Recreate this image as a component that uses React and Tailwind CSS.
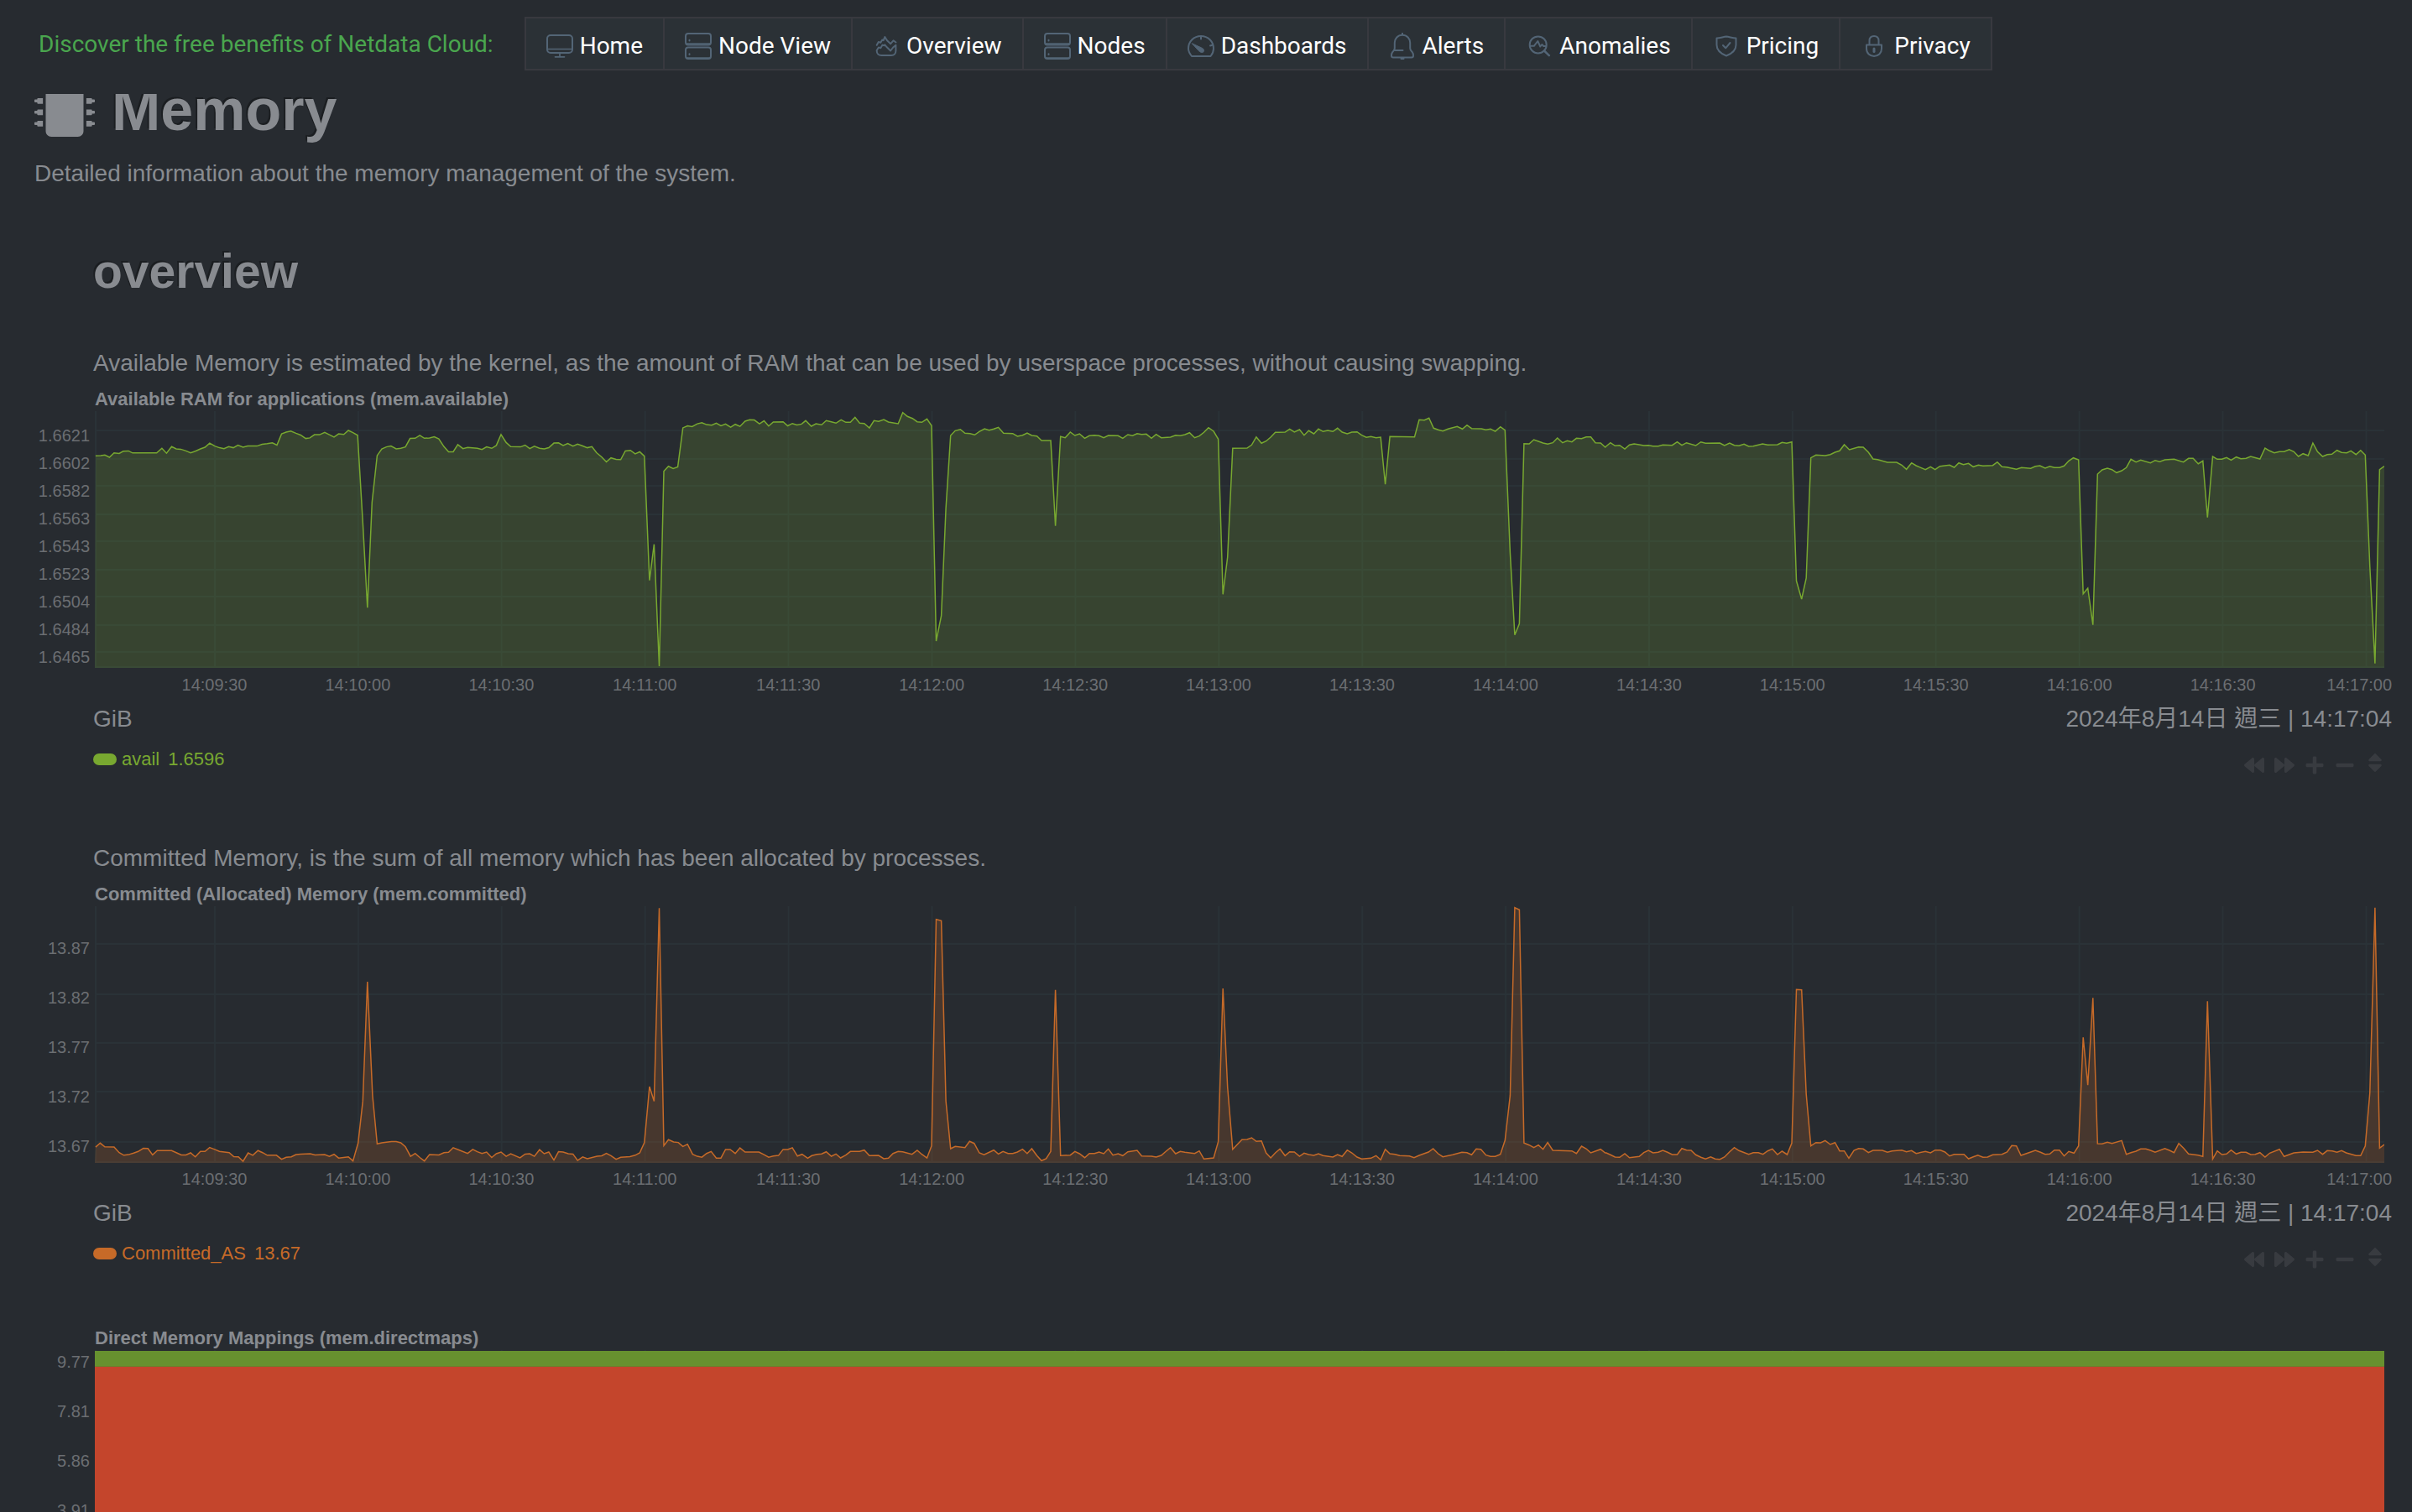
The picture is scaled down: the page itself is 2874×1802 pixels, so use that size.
import React from "react";
import { FaMicrochip, FaBackward, FaForward, FaPlus, FaMinus, FaSort } from "react-icons/fa";

const PLOT_W = 2728;
const PLOT_H = 306;
const TICK_STEP = 170.9;
const FIRST_TICK = 143;
const TICKS = [
  "14:09:30", "14:10:00", "14:10:30", "14:11:00", "14:11:30", "14:12:00", "14:12:30", "14:13:00",
  "14:13:30", "14:14:00", "14:14:30", "14:15:00", "14:15:30", "14:16:00", "14:16:30", "14:17:00",
];

/* Each trace is kept as three strips; a strip has its own origin and scale in the plot. */
const toPoints = (strips) =>
  strips
    .flatMap(({ x, y, ky, pts }) =>
      pts.trim().split(/\s+/).map((p) => {
        const [px, py] = p.split(",").map(Number);
        return `${(px / 1.6333 + x).toFixed(1)},${(py / ky + y).toFixed(1)}`;
      })
    )
    .join(" ");

const AVAILABLE = toPoints([
  {
    x: -113, y: -91, ky: 2.904,
    pts: `186,419 196,418 204,416 213,424 222,409 232,411 240,403 250,402 258,409 305,409 315,393 324,410 334,387 343,395 352,396 362,402 371,409 380,403 390,395 399,389 408,375 418,385 427,391 436,394 445,387 454,391 463,382 473,389 482,385 500,385 510,379 520,377 530,374 539,382 548,343 557,337 566,333 576,341 585,347 595,359 603,357 612,346 622,346 632,338 641,346 650,354 659,343 669,345 678,331 687,339 696,348 706,650 715,944 724,580 734,418 743,395 752,388 761,385 771,395 780,393 789,388 798,359 808,358 817,348 826,358 836,357 845,353 854,360 864,387 873,405 882,405 891,380 901,394 910,390 929,393 938,397 947,388 957,393 966,383 975,345 985,373 994,387 1013,388 1022,382 1031,394 1040,386 1050,393 1059,395 1068,391 1078,375 1087,374 1096,383 1105,376 1115,385 1124,378 1133,384 1143,391 1152,387 1161,408 1171,423 1180,440 1189,426 1199,431 1208,432 1217,402 1227,400 1236,412 1245,405 1254,420 1264,850 1273,725 1283,1147 1292,472 1301,455 1310,463 1319,457 1329,322 1338,315 1347,318 1357,308 1366,304 1375,311 1385,313 1394,306 1403,315 1412,309 1422,320 1431,310 1440,317 1450,299 1459,294 1468,295 1478,308 1487,298 1496,316 1505,302 1524,301 1533,315 1542,307 1551,312 1560,309`,
  },
  {
    x: 847, y: -31, ky: 3,
    pts: `0,127 11,147 20,138 31,142 40,127 50,131 59,136 69,124 78,133 87,133 96,115 105,136 114,137 124,153 133,127 142,130 152,123 161,132 180,138 189,98 198,112 208,119 217,131 226,133 236,121 245,145 254,915 264,825 273,440 282,180 291,163 301,158 310,172 320,173 329,178 338,166 348,156 357,161 366,157 375,151 385,172 403,173 412,183 422,179 431,171 440,180 450,182 459,198 477,198 486,503 496,184 505,188 515,168 524,180 533,174 543,190 552,181 562,179 571,181 580,188 589,180 608,181 617,190 627,177 636,181 645,173 654,176 663,175 673,190 682,176 692,188 710,186 720,179 729,181 738,177 747,170 757,188 766,182 775,169 784,152 794,165 803,193 812,748 821,615 831,226 859,225 868,214 877,185 887,208 896,200 905,186 914,169 933,168 942,157 951,168 961,159 970,179 979,163 989,174 998,157 1007,166 1016,162 1026,166 1035,154 1044,168 1054,174 1063,168 1073,167 1082,179 1091,187 1100,184 1110,188 1119,186 1128,355 1137,184 1185,185 1194,124 1204,125 1213,118 1222,154 1231,160 1240,164 1250,157 1268,148 1278,157 1287,143 1296,155 1315,156 1324,160 1333,157 1342,165 1352,149 1361,161 1371,600 1380,893 1389,853 1398,209 1408,210 1417,195 1426,201 1435,207 1444,211 1454,206 1463,189 1473,206 1482,199 1491,203 1500,190 1510,191 1519,185 1528,185 1537,206 1547,207 1556,222`,
  },
  {
    x: 1801, y: -31, ky: 3,
    pts: `0,218 8,206 17,217 26,215 36,228 45,214 54,210 64,213 73,216 82,215 91,218 101,218 110,214 128,215 138,203 147,215 156,206 174,216 184,203 193,208 221,207 230,216 240,207 249,215 258,217 268,211 277,219 286,218 304,210 314,214 333,213 342,205 351,208 361,203 370,700 380,765 389,690 398,260 408,250 426,252 436,248 445,240 454,235 463,213 473,231 491,221 500,222 510,240 519,264 528,266 547,276 565,276 575,286 584,301 594,278 603,288 621,302 631,292 640,302 649,290 668,286 677,294 686,278 695,284 705,280 714,292 724,286 733,289 752,287 761,275 770,292 779,293 798,301 808,295 826,298 835,290 844,288 854,297 863,290 872,295 882,295 891,289 900,271 909,260 919,267 928,746 937,726 947,857 956,318 965,303 975,297 984,302 993,313 1003,306 1012,295 1021,265 1031,275 1040,268 1059,278 1068,269 1077,274 1087,267 1105,265 1123,275 1133,262 1142,262 1152,281 1161,271 1170,473 1180,255 1189,265 1198,265 1207,259 1216,268 1226,257 1235,263 1245,262 1254,255 1272,264 1282,225 1291,235 1300,242 1310,238 1319,238 1329,230 1338,238 1347,255 1356,245 1366,252 1375,207 1384,238 1394,255 1403,248 1412,247 1422,233 1431,241 1441,242 1449,235 1459,248 1468,233 1477,250 1486,650 1496,995 1505,302 1514,290`,
  },
]);

const COMMITTED = toPoints([
  {
    x: -113, y: -81, ky: 2.904,
    pts: `186,1069 195,1055 204,1068 222,1069 232,1088 241,1097 250,1095 260,1090 269,1084 279,1073 288,1074 297,1096 306,1081 334,1081 344,1089 353,1096 362,1096 371,1089 380,1103 390,1084 399,1084 408,1070 418,1077 427,1084 446,1088 455,1102 464,1103 473,1118 483,1089 492,1097 502,1081 511,1088 520,1097 538,1097 548,1111 557,1104 567,1103 576,1095 585,1093 604,1092 613,1096 632,1095 641,1101 650,1094 659,1107 678,1103 687,1117 697,1055 706,910 715,497 725,890 734,1058 743,1054 752,1052 762,1050 771,1050 780,1054 789,1068 799,1101 808,1091 817,1105 826,1117 836,1095 854,1096 864,1088 873,1087 882,1071 892,1078 910,1091 920,1077 929,1085 938,1091 947,1086 957,1105 966,1092 975,1086 985,1101 994,1092 1012,1106 1022,1093 1031,1092 1040,1101 1050,1078 1059,1092 1068,1086 1078,1114 1087,1085 1096,1086 1106,1092 1115,1093 1124,1115 1134,1103 1143,1109 1162,1101 1171,1099 1180,1091 1189,1099 1199,1111 1208,1104 1226,1102 1236,1097 1245,1089 1254,1054 1264,860 1273,910 1283,242 1292,1064 1301,1043 1311,1051 1320,1053 1329,1067 1338,1059 1348,1094 1357,1101 1366,1104 1375,1091 1384,1084 1394,1107 1403,1107 1412,1077 1421,1077 1431,1091 1440,1072 1450,1086 1477,1086 1487,1095 1496,1104 1505,1100 1515,1098 1524,1077 1533,1077 1542,1071 1552,1100 1561,1094`,
  },
  {
    x: 847, y: -21, ky: 3,
    pts: `4,964 12,955 22,950 31,949 40,941 50,957 59,949 68,963 78,953 87,940 105,940 114,935 124,955 142,954 152,966 161,964 170,947 180,940 189,941 207,950 217,936 226,950 236,963 245,920 254,110 264,115 273,760 282,930 291,922 310,926 319,904 328,911 338,945 347,952 366,935 375,949 384,940 394,947 403,947 412,942 422,932 431,947 440,930 450,955 459,973 468,966 477,940 486,362 496,955 515,953 524,940 533,948 543,962 552,947 562,947 571,942 580,948 589,931 598,953 608,948 617,955 627,941 645,936 654,956 673,957 682,960 692,954 701,940 710,926 720,948 729,940 738,943 757,947 766,938 775,967 794,963 803,905 812,357 821,710 831,932 840,915 849,898 859,897 868,891 877,904 887,902 896,945 905,963 914,945 923,931 933,955 942,941 951,942 961,957 970,946 979,951 989,954 998,948 1007,955 1026,960 1035,951 1044,958 1054,935 1063,945 1073,960 1082,967 1100,964 1110,955 1119,970 1128,932 1137,948 1147,950 1156,955 1175,956 1184,962 1194,954 1203,948 1212,942 1221,930 1231,948 1240,959 1259,952 1277,943 1287,944 1296,952 1305,931 1314,932 1324,953 1333,958 1342,958 1352,950 1361,900 1371,740 1380,68 1389,76 1398,910 1408,917 1417,926 1426,917 1435,932 1444,908 1454,936 1491,938 1500,947 1510,921 1519,930 1528,945 1547,932 1556,945`,
  },
  {
    x: 1801, y: -21, ky: 3,
    pts: `0,945 8,952 17,960 26,961 36,948 45,962 64,958 73,944 82,936 91,945 101,943 110,936 119,943 128,951 138,951 147,929 156,935 165,936 174,952 184,961 193,967 203,959 212,967 221,968 230,960 240,941 249,926 258,937 277,950 286,944 296,944 305,950 314,938 323,931 333,951 342,939 352,951 361,910 370,361 380,362 389,735 398,920 408,908 417,909 426,901 436,915 445,908 454,938 463,938 472,964 482,936 491,929 500,931 510,944 519,936 537,936 547,943 556,938 575,935 584,941 594,937 603,947 621,940 631,945 640,935 650,935 659,942 668,956 677,950 696,950 705,966 714,959 723,953 733,961 742,960 752,952 770,950 780,942 789,919 798,920 807,954 826,942 835,936 845,943 854,950 863,949 872,935 882,935 891,956 900,940 910,946 919,920 928,532 937,703 947,391 956,912 965,913 975,907 984,911 1003,901 1012,950 1021,944 1031,939 1040,931 1050,931 1059,936 1068,943 1087,929 1096,936 1105,944 1114,911 1124,929 1133,949 1152,953 1161,958 1170,403 1180,967 1189,938 1198,951 1207,949 1216,935 1226,949 1235,943 1245,943 1254,951 1263,950 1272,944 1282,960 1291,946 1310,932 1319,958 1338,945 1356,942 1375,943 1384,936 1394,950 1403,937 1413,938 1422,943 1431,937 1440,945 1459,955 1468,955 1477,920 1486,730 1496,68 1505,928 1514,915`,
  },
]);

function NavIcon({ children }) {
  return (
    <svg viewBox="0 0 32 32" className="size-8 shrink-0" fill="none" stroke="#536576" strokeWidth="2" strokeLinecap="round" strokeLinejoin="round" aria-hidden="true">
      {children}
    </svg>
  );
}

const serverIcon = (
  <NavIcon>
    <rect x="1" y="1" width="30" height="13.5" rx="3" />
    <path d="M2 13h28M2 30h28" strokeWidth="1.4" />
    <rect x="1" y="17.5" width="30" height="13.5" rx="3" />
    <path d="M5.5 8.8v.8M5.5 25.3v.8" />
  </NavIcon>
);

const NAV = [
  {
    label: "Home",
    icon: (
      <NavIcon>
        <rect x="1" y="3" width="30" height="21" rx="4" />
        <path d="M1 19.5h30M16 24v4M10.5 28.8h11" strokeWidth="1.7" />
      </NavIcon>
    ),
  },
  { label: "Node View", icon: serverIcon },
  {
    label: "Overview",
    icon: (
      <NavIcon>
        <path d="M4.700 14.800 6.800 11l2.500.7 1.900-3.200 1.500.6L14.300 5l2.700 4.200 4.200 4L24.500 9.300l3 2.200M4.700 21l2.200-3.600 2.400.8 2.200-3.600 2 .7.8-1 2.500 3 4.300 4.200 3.400-4.300 2.900-2.500v6.800c0 3.300-2.200 5.500-5.400 5.500H10.200c-3.200 0-5.500-2.200-5.500-5.500Z" />
      </NavIcon>
    ),
  },
  { label: "Nodes", icon: serverIcon },
  {
    label: "Dashboards",
    icon: (
      <NavIcon>
        <path d="M5 28h22.500c2-2.500 3.500-5.600 3.500-9C31 10.500 24.500 4 16 4S1 10.500 1 19c0 3.400 2 6.500 4 9Z" />
        <path d="M16 4v3.500M30 14.500l-3 1" />
        <path d="M5.500 13 13 21.200c2 2 4.500 3.200 6 1.600 1.300-1.500.4-3.600-1.800-4.600Z" fill="#536576" strokeWidth="1" />
      </NavIcon>
    ),
  },
  {
    label: "Alerts",
    icon: (
      <NavIcon>
        <path d="M16 .8v2M16 2.800c-5.500 0-9.200 4.200-9.200 9.200v6.500c0 2-1.200 3-2.600 4.700-.9 1.200-1.200 2.500-1.200 4.200 0 1.200.8 2 2 2h22c1.200 0 2-.8 2-2 0-1.700-.3-3-1.200-4.200-1.400-1.700-2.600-2.700-2.600-4.700V12c0-5-3.700-9.200-9.200-9.200ZM6.500 21h10M14.500 31h3" />
      </NavIcon>
    ),
  },
  {
    label: "Anomalies",
    icon: (
      <NavIcon>
        <circle cx="14.7" cy="14.4" r="10" />
        <path d="m22 21.500 5.800 5.600" strokeWidth="2.5" />
        <path d="M5 15.800h4.800L14.300 10l3 6.500 2-2.500 2 2H24" />
      </NavIcon>
    ),
  },
  {
    label: "Pricing",
    icon: (
      <NavIcon>
        <path d="M4.500 6.500C8.500 6.400 12.500 4.800 16 4.500c3.500.3 7.500 1.900 11.500 2v8c0 6-4.500 10.300-11.500 13C9 24.800 4.500 20.500 4.500 14.500Z" />
        <path d="m12 15 3.200 3.300L20.500 12" />
      </NavIcon>
    ),
  },
  {
    label: "Privacy",
    icon: (
      <NavIcon>
        <path d="M10.500 14V9.500C10.500 6 12.800 4 16 4s5.500 2 5.500 5.500V14" />
        <path d="M7 14.500h18v4.500c0 5.500-4 9-9 9s-9-3.500-9-9Z" />
        <path d="M16 19v3.500" strokeWidth="3" />
      </NavIcon>
    ),
  },
];

function TopBar() {
  return (
    <header className="flex h-28 shrink-0 items-start gap-[37px] pt-5 pl-[46px] font-[Roboto,sans-serif] text-[28px] leading-8">
      <p className="flex h-16 items-center pt-0.5 whitespace-nowrap text-[#4aa64e]">Discover the free benefits of Netdata Cloud:</p>
      <nav className="flex border-2 border-r-0 border-[#38393f] bg-[#2b3136]">
        {NAV.map(({ label, icon }) => (
          <a key={label} href="#" className="flex h-15 items-center gap-2 border-r-2 border-[#38393f] px-6 pt-1.5 whitespace-nowrap text-white">
            {icon}
            {label}
          </a>
        ))}
      </nav>
    </header>
  );
}

function Plot({ label, rows, children }) {
  return (
    <svg viewBox={`0 0 ${PLOT_W} ${PLOT_H}`} preserveAspectRatio="none" className="block h-[306px] w-full" role="img" aria-label={label}>
      <g stroke="#2a3237" strokeWidth="2">
        <path d={`M1 0V${PLOT_H}`} />
        {TICKS.map((t, i) => (
          <path key={t} d={`M${FIRST_TICK + i * TICK_STEP} 0V${PLOT_H}`} />
        ))}
        {rows.map((y) => (
          <path key={y} d={`M0 ${y}H${PLOT_W}`} />
        ))}
        <path d={`M0 ${PLOT_H - 1}H${PLOT_W}`} />
      </g>
      {children}
    </svg>
  );
}

function Area({ points, color }) {
  return (
    <>
      <polygon points={`0,${PLOT_H} ${points} ${PLOT_W},${PLOT_H}`} fill={color} fillOpacity="0.2" />
      <polyline points={points} fill="none" stroke={color} strokeWidth="1.5" />
    </>
  );
}

function TimeAxis() {
  return (
    <div className="mt-[5px] mr-6 ml-[72px] flex text-xl leading-7 text-[#6b6e72]">
      <span className="basis-0" style={{ flexGrow: 57 }} />
      {TICKS.map((t, i) => {
        const last = i === TICKS.length - 1;
        return (
          <span key={t} className={last ? "basis-0 text-right" : "basis-0 text-center"} style={{ flexGrow: last ? 116 : TICK_STEP }}>
            {t}
          </span>
        );
      })}
    </div>
  );
}

const TOOLS = [
  ["Pan left", <FaBackward className="size-6" />],
  ["Pan right", <FaForward className="size-6" />],
  ["Zoom in", <FaPlus className="size-6" />],
  ["Zoom out", <FaMinus className="size-6" />],
  ["Resize", <FaSort className="mb-1.5 size-7" />],
];

function Chart({ description, title, yLabels, yClass, legend, children }) {
  return (
    <section className="pb-[73px]">
      {description && <p className="mb-[9px] ml-[70px] pt-[11px] text-[28px] leading-10">{description}</p>}
      <h3 className="ml-[72px] text-[22px] leading-7 font-bold">{title}</h3>
      <div className="mr-[33px] flex">
        <div className={`flex w-[72px] shrink-0 flex-col pr-1.5 text-right text-xl leading-7 text-[#6b6e72] ${yClass}`}>
          {yLabels.map((v) => (
            <span key={v}>{v}</span>
          ))}
        </div>
        <div className="min-w-0 flex-1">{children}</div>
      </div>
      <TimeAxis />
      {legend && (
        <div className="mr-6 ml-[70px]">
          <div className="mt-[7px] flex justify-between text-[28px] leading-10">
            <span>GiB</span>
            <time>2024年8月14日 週三 | 14:17:04</time>
          </div>
          <div className="mt-3.5 flex h-7 items-center justify-between">
            <div className={`flex items-center gap-1.5 text-[22px] leading-7 ${legend.textClass}`}>
              <span className={`h-3.5 w-7 rounded-full ${legend.swatchClass}`} />
              <span>{legend.name}</span>
              <span className="ml-1">{legend.value}</span>
            </div>
            <div className="mr-0.5 flex pt-3.5 text-[#383b40]">
              {TOOLS.map(([name, icon]) => (
                <button key={name} type="button" aria-label={name} className="flex h-7 w-9 items-center justify-center">
                  {icon}
                </button>
              ))}
            </div>
          </div>
        </div>
      )}
    </section>
  );
}

export default function App() {
  return (
    <div className="flex h-screen flex-col overflow-hidden bg-[#272b30] font-['Liberation_Sans','Noto_Sans_CJK_TC',sans-serif] text-[#888b90]">
      <TopBar />
      <main className="min-h-0 flex-1 overflow-hidden pl-[41px]">
        <h1 className="-mt-[21px] flex items-start gap-5 text-[70px] leading-20 font-bold text-shadow-[-2px_-2px_0_rgb(0_0_0/0.3)]">
          <FaMicrochip className="size-18" />
          Memory
        </h1>
        <p className="mt-4 text-[28px] leading-10">Detailed information about the memory management of the system.</p>
        <h2 className="mt-16 mb-[47px] ml-[70px] text-[57px] leading-16 font-bold text-shadow-[-2px_-2px_0_rgb(0_0_0/0.3)]">overview</h2>

        <Chart
          description="Available Memory is estimated by the kernel, as the amount of RAM that can be used by userspace processes, without causing swapping."
          title="Available RAM for applications (mem.available)"
          yLabels={["1.6621", "1.6602", "1.6582", "1.6563", "1.6543", "1.6523", "1.6504", "1.6484", "1.6465"]}
          yClass="gap-[5px] pt-[15px]"
          legend={{ name: "avail", value: "1.6596", textClass: "text-[#78a830]", swatchClass: "bg-[#78a830]" }}
        >
          <Plot label="Available RAM for applications" rows={[23, 57, 89, 123, 155, 189, 221, 255, 287]}>
            <Area points={AVAILABLE} color="#78a830" />
          </Plot>
        </Chart>

        <Chart
          description="Committed Memory, is the sum of all memory which has been allocated by processes."
          title="Committed (Allocated) Memory (mem.committed)"
          yLabels={["13.87", "13.82", "13.77", "13.72", "13.67"]}
          yClass="gap-[31px] pt-9"
          legend={{ name: "Committed_AS", value: "13.67", textClass: "text-[#c66a28]", swatchClass: "bg-[#c66a28]" }}
        >
          <Plot label="Committed memory" rows={[45, 105, 163, 221, 281]}>
            <Area points={COMMITTED} color="#c66a28" />
          </Plot>
        </Chart>

        <Chart
          title="Direct Memory Mappings (mem.directmaps)"
          yLabels={["9.77", "7.81", "5.86", "3.91", "1.95"]}
          yClass="gap-[31px]"
        >
          <Plot label="Direct memory mappings" rows={[]}>
            <rect y="1" width={PLOT_W} height="19" fill="#67912f" />
            <rect y="20" width={PLOT_W} height="286" fill="#c4452c" />
            <path d={`M0 19.5H${PLOT_W}`} stroke="#6f7d2d" />
          </Plot>
        </Chart>
      </main>
    </div>
  );
}
